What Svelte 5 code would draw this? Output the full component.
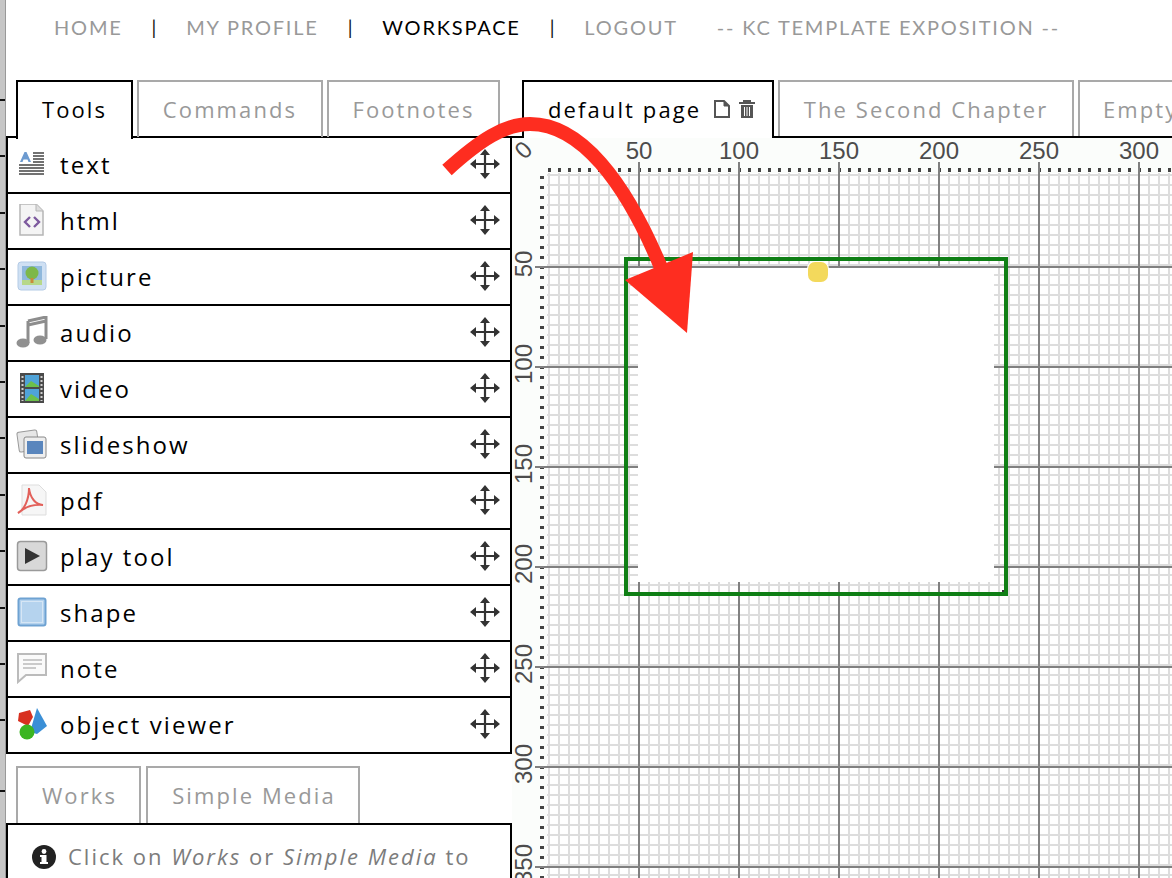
<script>
  const navItems = [
    { label: "HOME" }, { sep: true },
    { label: "MY PROFILE" }, { sep: true },
    { label: "WORKSPACE", active: true }, { sep: true },
    { label: "LOGOUT" },
    { label: "-- KC TEMPLATE EXPOSITION --" }
  ];
  const tools = ["text", "html", "picture", "audio", "video", "slideshow", "pdf", "play tool", "shape", "note", "object viewer"];
  const ticks = [...Array(12).keys()];
  const xLabels = [50, 100, 150, 200, 250, 300];
  const yLabels = [50, 100, 150, 200, 250, 300, 350];
</script>

<div class="page">
  <div class="edge">
    {#each ticks as t}<i></i>{/each}
    <i class="last"></i>
  </div>

  <div class="main">
    <nav>
      {#each navItems as item}
        {#if item.sep}
          <span class="sep">|</span>
        {:else}
          <span class="link" class:active={item.active}>{item.label}</span>
        {/if}
      {/each}
    </nav>

    <div class="work">
      <div class="left">
        <div class="tabs">
          <div class="tab active tools-tab">Tools</div>
          <div class="tab commands-tab">Commands</div>
          <div class="tab footnotes-tab">Footnotes</div>
        </div>
        <div class="panel">
          {#each tools as tool}
            <div class="row">
              <svg class="icon" viewBox="0 0 32 32" width="32" height="32">
                {#if tool === "text"}
                  <path d="M4 14 L8.5 4 H10.5 L15 14 H12.5 L11.5 11.5 H7.5 L6.5 14 Z" fill="#6d9bd0"/>
                  <path d="M17 5 H28 M17 8 H28 M17 11 H28 M17 14 H28 M3 17 H28 M3 20 H28 M3 23 H28 M3 26 H28" stroke="#444" stroke-width="1.6"/>
                {:else if tool === "html"}
                  <path d="M4 0 H20 L27 7 V31 H4 Z" fill="#f4f4f4" stroke="#b5b5b5" stroke-width="1.5"/>
                  <path d="M20 0 V7 H27" fill="#ddd" stroke="#b5b5b5"/>
                  <path d="M14 13 L9 18 L14 23 M18 13 L23 18 L18 23" fill="none" stroke="#7d5a9e" stroke-width="2.4"/>
                {:else if tool === "picture"}
                  <rect x="2" y="2" width="28" height="28" rx="3" fill="#cfe0f3" stroke="#b4cbe6"/>
                  <rect x="6" y="6" width="20" height="19" fill="#8fb8dc"/>
                  <rect x="6" y="20" width="20" height="5" fill="#b7d88a"/>
                  <circle cx="16" cy="13" r="6.5" fill="#7db84a"/>
                  <rect x="14.5" y="18" width="3" height="5" fill="#c98a3a"/>
                {:else if tool === "audio"}
                  <path d="M12 5 L30 1 V23 M12 5 V27 M12 9 L30 5" fill="none" stroke="#8d8d8d" stroke-width="3"/>
                  <ellipse cx="7" cy="27" rx="6.5" ry="4.5" fill="#909090"/>
                  <ellipse cx="24" cy="24" rx="6.5" ry="4.5" fill="#909090"/>
                {:else if tool === "video"}
                  <rect x="4" y="1" width="24" height="30" fill="#4a4a4a"/>
                  <rect x="9" y="3" width="14" height="12" fill="#4fa3d8"/>
                  <path d="M9 15 L15 9 L23 14 V15 Z" fill="#6cc04a"/>
                  <rect x="9" y="17" width="14" height="12" fill="#4fa3d8"/>
                  <path d="M9 29 L15 22 L23 27 V29 Z" fill="#6cc04a"/>
                  <path d="M6.5 4 V29 M25.5 4 V29" stroke="#cfcfcf" stroke-width="2" stroke-dasharray="2 2"/>
                {:else if tool === "slideshow"}
                  <rect x="2" y="3" width="20" height="20" rx="2" fill="#e6e6e6" stroke="#999" transform="rotate(-8 12 13)"/>
                  <rect x="8" y="9" width="22" height="21" rx="2" fill="#eee" stroke="#888"/>
                  <rect x="11" y="13" width="16" height="13" fill="#5a86bd"/>
                {:else if tool === "pdf"}
                  <path d="M6 1 H23 L30 8 V31 H6 Z" fill="#f6f6f6" stroke="#ddd"/>
                  <path d="M2 29 C8 26 13 16 13 4 C14 14 20 21 27 21 C18 20 9 23 2 29 Z" fill="none" stroke="#e2605a" stroke-width="2"/>
                {:else if tool === "play tool"}
                  <rect x="1.5" y="1.5" width="29" height="29" rx="3" fill="#d8d8d8" stroke="#9a9a9a" stroke-width="1.5"/>
                  <path d="M9 8 L24 16 L9 24 Z" fill="#333"/>
                {:else if tool === "shape"}
                  <rect x="2.5" y="2.5" width="27" height="27" rx="2" fill="#b5d3ee" stroke="#6ea2d2" stroke-width="2"/>
                  <rect x="5.5" y="5.5" width="21" height="21" fill="none" stroke="#d6e6f5"/>
                {:else if tool === "note"}
                  <path d="M2 2 H30 V23 H10 L2 30 Z" fill="#fafafa" stroke="#bbb" stroke-width="2"/>
                  <path d="M7 8 H26 M7 12 H26 M7 16 H20" stroke="#bbb" stroke-width="1.6"/>
                {:else}
                  <path d="M21 0 L31 18 L21 26 L14 24 Z" fill="#3b8fd6"/>
                  <path d="M3 5 L14 2 L17 9 L12 18 L2 13 Z" fill="#d8301f"/>
                  <circle cx="11" cy="24" r="7.5" fill="#3cb521"/>
                {/if}
              </svg>
              <span class="name">{tool}</span>
              <svg class="move" viewBox="0 0 30 30" width="30" height="30">
                <path d="M15 3 V27 M3 15 H27" stroke="#333" stroke-width="2.2"/>
                <path d="M15 0 L20 6 H10 Z M15 30 L20 24 H10 Z M0 15 L6 10 V20 Z M30 15 L24 10 V20 Z" fill="#333"/>
              </svg>
            </div>
          {/each}
        </div>

        <div class="tabs lower">
          <div class="tab works-tab">Works</div>
          <div class="tab media-tab">Simple Media</div>
        </div>
        <div class="panel info">
          <svg viewBox="0 0 24 24" width="24" height="24">
            <circle cx="12" cy="12" r="12" fill="#222"/>
            <rect x="9.5" y="10" width="5" height="9" fill="#fff"/>
            <rect x="8" y="10" width="6" height="2" fill="#fff"/>
            <rect x="8" y="17" width="8" height="2" fill="#fff"/>
            <circle cx="12" cy="6.5" r="2.4" fill="#fff"/>
          </svg>
          <p>Click on <em>Works</em> or <em>Simple Media</em> to</p>
        </div>
      </div>

      <div class="right">
        <div class="tabs pages">
          <div class="tab active page-tab">
            <span class="page-name">default page</span>
            <svg viewBox="0 0 18 18" width="18" height="18">
              <path d="M2 1 H11 L16 6 V17 H2 Z" fill="none" stroke="#555" stroke-width="2"/>
              <path d="M11 1 V6 H16" fill="#555" stroke="#555"/>
            </svg>
            <svg viewBox="0 0 18 18" width="18" height="18">
              <path d="M1 3 H17 M6 3 V1 H12 V3" fill="none" stroke="#555" stroke-width="2"/>
              <path d="M3 5 H15 V18 H3 Z" fill="#555"/>
              <path d="M6.5 7 V16 M9 7 V16 M11.5 7 V16" stroke="#fff"/>
            </svg>
          </div>
          <div class="tab second-tab">The Second Chapter</div>
          <div class="tab empty-tab">Empty</div>
        </div>

        <div class="canvas">
          <span class="origin">0</span>
          {#each xLabels as n, i}
            <span class="xnum" style="left: {(i + 1) * 100 + 27}px">{n}</span>
          {/each}
          {#each yLabels as n, i}
            <span class="ynum" style="top: {(i + 1) * 100 + 26}px">{n}</span>
          {/each}
          <div class="grid"></div>
          <div class="ruler-x"></div>
          <div class="ruler-y"></div>
          {#each xLabels as n, i}
            <b class="xmark" style="left: {(i + 1) * 100 + 26}px"></b>
          {/each}
          {#each yLabels as n, i}
            <b class="ymark" style="top: {(i + 1) * 100 + 28}px"></b>
          {/each}
          <div class="sheet"></div>
          <div class="frame"></div>
          <div class="dot"></div>
        </div>
      </div>
    </div>
  </div>

  <svg class="arrow" viewBox="0 0 1172 878" width="1172" height="878">
    <path d="M447 170 C 480 140 505 124 530 124 C 580 124 625 180 662 270" fill="none" stroke="#fe2d20" stroke-width="14"/>
    <path d="M625 280 L693 252 L687 333 Z" fill="#fe2d20"/>
  </svg>
</div>

<style>
  :global(body) { margin: 0; background: #fff; }

  .page {
    position: relative;
    display: flex;
    width: 1172px;
    height: 878px;
    overflow: hidden;
    font-family: "Open Sans", sans-serif;
  }

  .edge {
    display: flex;
    flex-direction: column;
    gap: 54.4px;
    width: 5px;
    padding-top: 99px;
    background: #c6c6c6;
    border-right: 1px solid #999;
    flex: none;
    box-sizing: content-box;
  }
  .edge i { display: block; height: 2px; background: #111; flex: none; }
  .edge i.last { margin-top: 14px; }

  .main { flex: 1; min-width: 0; }

  nav {
    display: flex;
    align-items: center;
    height: 54px;
    padding-left: 48px;
    font-family: "Lato", sans-serif;
    font-size: 20px;
    letter-spacing: 1.8px;
    color: #999;
    white-space: nowrap;
  }
  .link { margin-right: 29px; }
  .link.active { color: #000; }
  .link:nth-last-child(2) { margin-right: 39px; }
  .sep { color: #111; margin-right: 28px; font-size: 19px; }

  .work { display: flex; padding-top: 26px; }
  .left { width: 506px; flex: none; }
  .right { flex: 1; min-width: 0; overflow: hidden; }

  .tabs {
    display: flex;
    gap: 4px;
    height: 57px;
    padding-left: 10px;
    box-sizing: border-box;
    font-size: 22px;
    letter-spacing: 2.1px;
  }
  .tab {
    display: flex;
    flex: none;
    align-items: center;
    justify-content: center;
    box-sizing: border-box;
    height: 57px;
    padding-bottom: 2px;
    border: 2px solid #a9a9a9;
    border-bottom: none;
    color: #999;
    white-space: nowrap;
  }
  .tab.active {
    position: relative;
    z-index: 1;
    height: 59px;
    padding-bottom: 4px;
    border-color: #000;
    background: #fff;
    color: #000;
  }
  .tools-tab { width: 117px; }
  .commands-tab { width: 186px; }
  .footnotes-tab { width: 173px; }
  .works-tab { width: 125px; padding-left: 2px; }
  .media-tab { width: 214px; margin-left: 1px; padding-left: 2px; }
  .page-tab { width: 252px; justify-content: flex-start; padding-left: 24px; }
  .page-name { margin-right: 12px; }
  .page-tab svg { margin-right: 7px; flex: none; }
  .second-tab { width: 296px; }
  .empty-tab { width: 200px; justify-content: flex-start; padding-left: 23px; }

  .panel {
    box-sizing: border-box;
    margin-top: -1px;
    border: 2px solid #000;
    background: #fff;
  }
  .row {
    display: flex;
    align-items: center;
    box-sizing: border-box;
    height: 56px;
    padding: 0 10px 2px 8px;
    border-bottom: 2px solid #000;
    font-size: 24px;
    letter-spacing: 2.1px;
    color: #000;
  }
  .row:last-child { height: 54px; border-bottom: none; }
  .icon { flex: none; margin-right: 12px; }
  .name { flex: 1; }
  .move { flex: none; }

  .lower { margin-top: 12px; }
  .info {
    display: flex;
    align-items: flex-start;
    gap: 12px;
    height: 80px;
    margin-top: 0;
    padding: 20px 0 0 24px;
    color: #7c7c7c;
    font-size: 22px;
    letter-spacing: 2px;
  }
  .info p { margin: 0; white-space: nowrap; line-height: 30px; margin-top: -4px; }

  .pages { height: 58px; border-bottom: 2px solid #000; }
  .pages .tab { height: 56px; padding-bottom: 0; }
  .pages .tab.active { height: 58px; padding-bottom: 2px; }

  .canvas {
    position: relative;
    height: 740px;
    background: #fbfdfb;
    overflow: hidden;
    font-family: "Liberation Sans", sans-serif;
    font-size: 24px;
    color: #4c4c4c;
  }
  .origin { position: absolute; left: 5px; top: -2px; transform: rotate(-45deg); }
  .xnum { position: absolute; top: -1px; transform: translateX(-50%); }
  .ynum {
    position: absolute;
    left: 0;
    line-height: 24px;
    writing-mode: vertical-rl;
    transform: translateY(-50%) rotate(180deg);
  }
  .grid {
    position: absolute;
    left: 35px;
    top: 35px;
    right: 0;
    bottom: 0;
    background-color: #fff;
    background-image:
      linear-gradient(90deg, #ddd 2px, transparent 2px),
      linear-gradient(0deg, #ddd 2px, transparent 2px);
    background-size: 10px 100%, 100% 10px;
    background-position: 1px 0, 0 3px;
  }
  .ruler-x {
    position: absolute;
    left: 36px;
    top: 30px;
    right: 0;
    height: 4px;
    background: repeating-linear-gradient(90deg, #444 0 3px, transparent 3px 10px);
  }
  .ruler-y {
    position: absolute;
    left: 28px;
    top: 38px;
    bottom: 0;
    width: 4px;
    background: repeating-linear-gradient(180deg, #444 0 3px, transparent 3px 10px);
  }
  .xmark { position: absolute; top: 24px; bottom: 0; width: 2px; background: #808080; }
  .ymark { position: absolute; left: 23px; right: 0; height: 2px; background: #808080; }
  .sheet {
    position: absolute;
    left: 126px;
    top: 130px;
    width: 356px;
    height: 314px;
    background: #fff;
  }
  .frame {
    position: absolute;
    left: 112px;
    top: 119px;
    width: 384px;
    height: 339px;
    box-sizing: border-box;
    border: 4px solid #0f7f15;
  }
  .frame::after {
    content: "";
    position: absolute;
    right: 0;
    bottom: 0;
    width: 2px;
    height: 2px;
    background: #333;
  }
  .dot {
    position: absolute;
    left: 296px;
    top: 124px;
    width: 20px;
    height: 20px;
    border-radius: 7px;
    background: #f3d95c;
    box-shadow: 0 0 0 1px #fff;
  }

  .arrow { position: absolute; left: 0; top: 0; z-index: 2; pointer-events: none; }
</style>
